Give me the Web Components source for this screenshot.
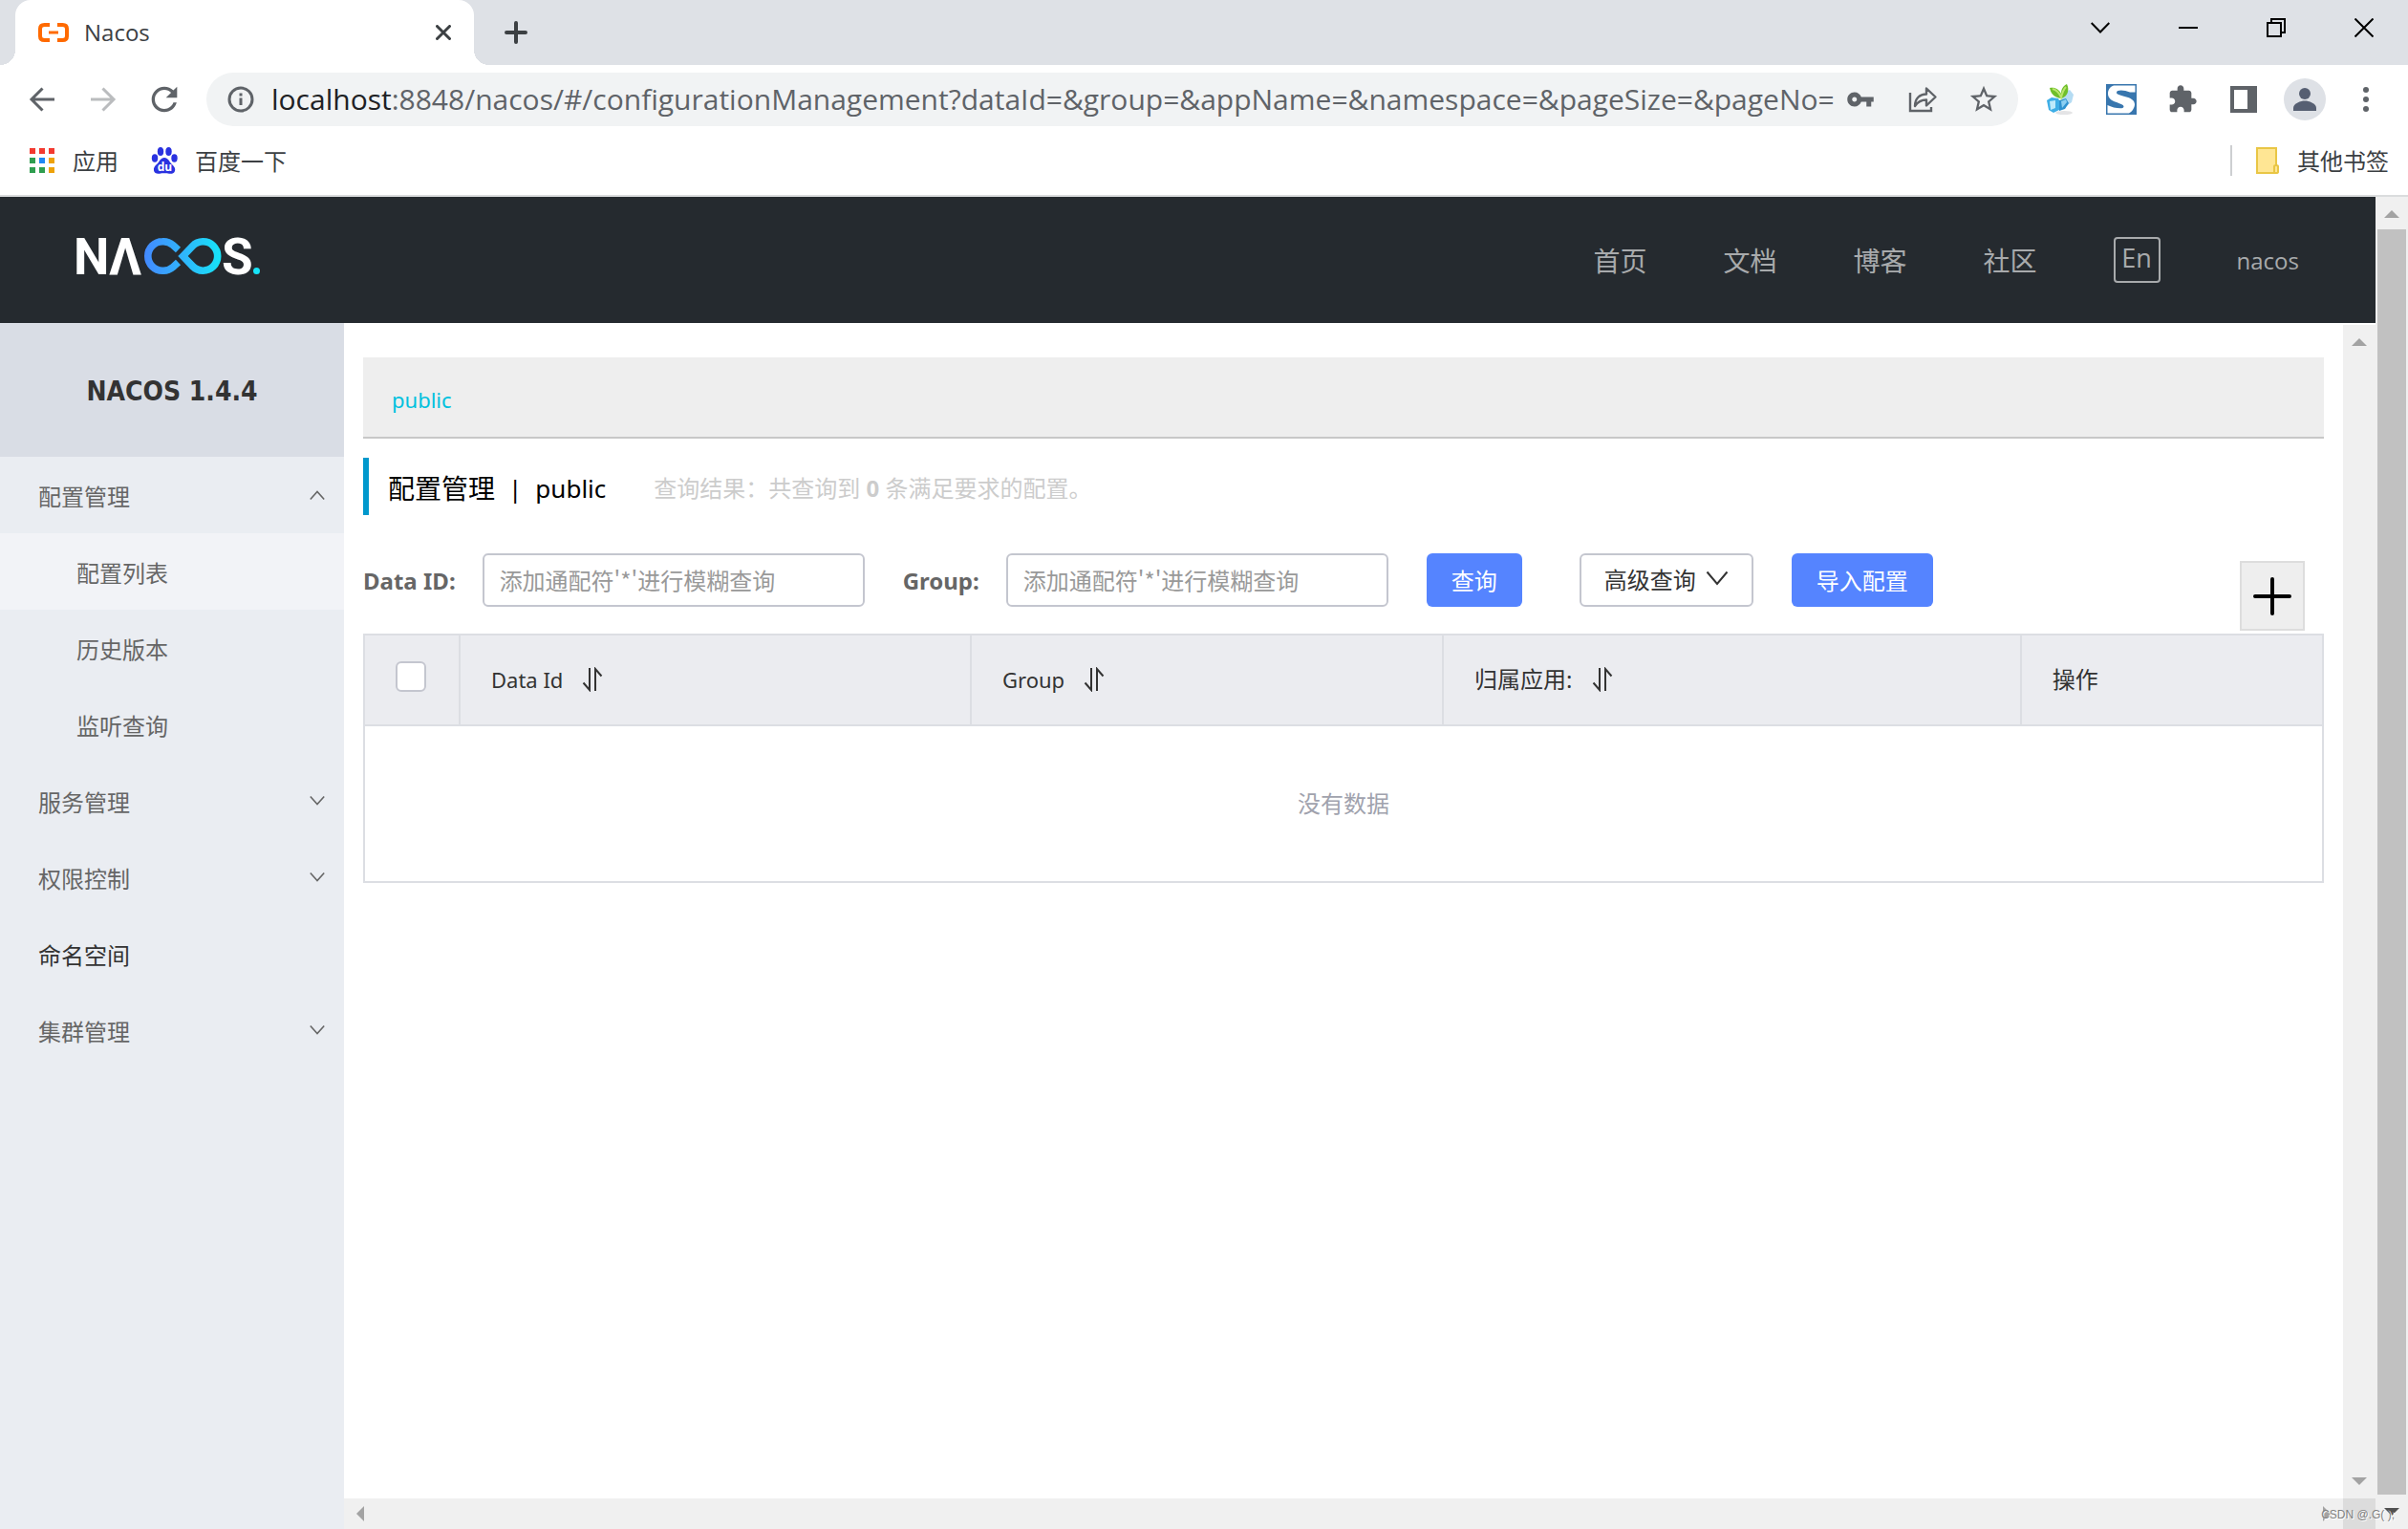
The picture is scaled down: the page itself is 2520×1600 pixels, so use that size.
<!DOCTYPE html>
<html lang="zh-CN">
<head>
<meta charset="utf-8">
<title>Nacos</title>
<style>
  html, body { margin: 0; height: 100%; }
  body {
    display: flex; flex-direction: column; height: 100vh; overflow: hidden; background: #fff;
    font-family: "Noto Sans", "Noto Sans CJK SC", sans-serif; font-size: 24px; color: #333;
    --latin: 22px;
  }
</style>
</head>
<body>
<browser-tabs></browser-tabs>
<browser-toolbar></browser-toolbar>
<browser-bookmarks></browser-bookmarks>
<page-viewport>
  <nacos-header slot="header"></nacos-header>
  <nacos-sidebar slot="side"></nacos-sidebar>
  <config-page slot="main"></config-page>
</page-viewport>

<script>
const define = (name, css, html) => {
  const tpl = document.createElement('template');
  tpl.innerHTML = `<style>
    :host, *, *::before, *::after { box-sizing: border-box; }
    button { font: inherit; color: inherit; background: none; border: 0; padding: 0; margin: 0;
      display: flex; align-items: center; justify-content: center; cursor: pointer; }
    a { color: inherit; text-decoration: none; }
    svg { display: block; flex: none; }
    ${css}</style>${html}`;
  customElements.define(name, class extends HTMLElement {
    constructor() {
      super();
      this.attachShadow({ mode: 'open' }).append(tpl.content.cloneNode(true));
    }
  });
};

/* ---------- browser frame ---------- */
define('browser-tabs', `
  :host { display: flex; align-items: flex-end; height: 68px; flex: none; background: #dee1e6;
    font-family: "Open Sans", "Noto Sans CJK SC", sans-serif; color: #3c4043; }
  .flare { width: 16px; height: 16px; }
  .left { background: radial-gradient(circle at 0 0, #dee1e6 16px, #fff 16px); }
  .right { background: radial-gradient(circle at 100% 0, #dee1e6 16px, #fff 16px); }
  .tab { width: 480px; height: 68px; padding: 0 24px; display: flex; align-items: center; gap: 16px;
    background: #fff; border-radius: 16px 16px 0 0; }
  .title { flex: 1; font-size: 24px; line-height: 32px; }
  .new { width: 56px; height: 68px; }
  .window { display: flex; margin-left: auto; align-self: flex-start; }
  .window button { width: 92px; height: 58px; }
`, `
  <span class="flare left"></span>
  <div class="tab">
    <svg width="32" height="20" viewBox="0 0 32 20" fill="none" stroke="#ff6a00"><path d="M12 2H6.500Q2 2 2 6v8q0 4 4.500 4H12M20 2h5.500Q30 2 30 6v8q0 4-4.500 4H20" stroke-width="4"/><path d="M11 10h10" stroke-width="3"/></svg>
    <span class="title">Nacos</span>
    <button aria-label="Close tab"><svg width="16" height="16" viewBox="0 0 16 16" stroke="#3c4043" stroke-width="3" stroke-linecap="round"><path d="M1.500 1.500l13 13M14.500 1.500l-13 13"/></svg></button>
  </div>
  <span class="flare right"></span>
  <button class="new" aria-label="New tab"><svg width="24" height="24" viewBox="0 0 24 24" stroke="#3c4043" stroke-width="4" stroke-linecap="round"><path d="M12 2v20M2 12h20"/></svg></button>
  <div class="window">
    <button aria-label="Search tabs"><svg width="20" height="20" viewBox="0 0 20 20" fill="none" stroke="#000" stroke-width="2"><path d="M.7 5L10 14.500 19.300 5"/></svg></button>
    <button aria-label="Minimize"><svg width="20" height="20" viewBox="0 0 20 20" stroke="#000" stroke-width="2"><path d="M0 10h20"/></svg></button>
    <button aria-label="Restore"><svg width="20" height="20" viewBox="0 0 20 20" fill="none" stroke="#000" stroke-width="2"><path d="M1 5h14v14H1zM5 5V1h14v14h-4"/></svg></button>
    <button aria-label="Close"><svg width="20" height="20" viewBox="0 0 20 20" stroke="#000" stroke-width="2"><path d="M.5.500l19 19M19.500.500l-19 19"/></svg></button>
  </div>
`);

define('browser-toolbar', `
  :host { display: flex; align-items: center; height: 72px; flex: none; padding: 0 12px; background: #fff;
    font-family: "Open Sans", "Noto Sans CJK SC", sans-serif; }
  button { width: 64px; height: 56px; flex: none; }
  .box { flex: 1; min-width: 0; display: flex; align-items: center; height: 56px; margin: 0 12px;
    padding: 0 4px 0 20px; border-radius: 28px; background: #f1f3f4; font-size: 30px; line-height: 40px; }
  .box > svg { margin-right: 16px; }
  .key { width: 48px; justify-content: flex-start; }
  label { color: #202124; }
  input { flex: 1; min-width: 0; border: 0; padding: 0; margin: 0; background: none; outline: 0;
    font: inherit; color: #5f6368; height: 40px; }
  .avatar { display: grid; place-items: center; width: 44px; height: 44px; border-radius: 50%; background: #dee1e6; }
`, `
  <button aria-label="Back"><svg width="28" height="28" viewBox="0 0 28 28" fill="none" stroke="#5f6368" stroke-width="3"><path d="M27 14H3M14.500 2.500L3 14l11.500 11.500"/></svg></button>
  <button aria-label="Forward"><svg width="28" height="28" viewBox="0 0 28 28" fill="none" stroke="#babcbe" stroke-width="3"><path d="M1 14h24M13.500 2.500L25 14 13.500 25.500"/></svg></button>
  <button aria-label="Reload"><svg width="40" height="40" viewBox="0 0 24 24" fill="#5f6368"><path d="M17.650 6.350C16.200 4.900 14.210 4 12 4c-4.420 0-7.990 3.580-7.990 8s3.570 8 7.990 8c3.730 0 6.840-2.550 7.730-6h-2.080c-.82 2.330-3.040 4-5.650 4-3.310 0-6-2.690-6-6s2.690-6 6-6c1.660 0 3.140.69 4.220 1.780L13 11h7V4z"/></svg></button>
  <div class="box">
    <svg width="32" height="32" viewBox="0 0 32 32" fill="none" stroke="#5f6368" stroke-width="3"><circle cx="16" cy="16" r="12"/><path d="M16 14.500V22M16 9.500v3"/></svg>
    <label for="url">localhost</label><input id="url" type="text" spellcheck="false" value=":8848/nacos/#/configurationManagement?dataId=&amp;group=&amp;appName=&amp;namespace=&amp;pageSize=&amp;pageNo=">
    <button class="key" aria-label="Passwords"><svg width="30" height="30" viewBox="0 0 24 24" fill="#5f6368"><path d="M12.650 10C11.830 7.670 9.610 6 7 6c-3.310 0-6 2.690-6 6s2.690 6 6 6c2.610 0 4.830-1.670 5.650-4H17v4h4v-4h2v-4H12.650zM7 14c-1.100 0-2-.9-2-2s.9-2 2-2 2 .9 2 2-.9 2-2 2z"/></svg></button>
    <button aria-label="Share"><svg width="32" height="32" viewBox="0 0 32 32" fill="none" stroke="#5f6368" stroke-width="2.400"><path d="M3 9v19h22v-4"/><path d="M8 23c0-8 5-12.500 12-12.500V4.500l9.500 9-9.500 9v-6C14 16.500 11 18.500 8 23z" stroke-linejoin="round"/></svg></button>
    <button aria-label="Bookmark"><svg width="34" height="34" viewBox="0 0 24 24" fill="#5f6368"><path d="M22 9.240l-7.190-.62L12 2 9.190 8.630 2 9.240l5.460 4.730L5.820 21 12 17.270 18.180 21l-1.630-7.030L22 9.240zM12 15.400l-3.760 2.270 1-4.280-3.320-2.880 4.380-.38L12 6.100l1.710 4.040 4.380.38-3.320 2.880 1 4.280L12 15.400z"/></svg></button>
  </div>
  <button aria-label="Cube extension"><svg width="32" height="32" viewBox="0 0 32 32">
    <ellipse cx="20" cy="30" rx="9" ry="2" fill="#e4e4e6"/>
    <path d="M18 10l8-4 4 5-2 8-7 5-5-2z" fill="#b5dcf3"/>
    <path d="M2 17l5-3 7 1 2 4-1 8-6 3-5-3z" fill="#3eaee6"/>
    <path d="M5 18l6-1v8l-5 2z" fill="#bdeafb"/><path d="M15 17l7-2 3 5-4 6-6 2z" fill="#2f93d0"/><path d="M17 18l5-2 1 3-5 6z" fill="#8dd0f2"/>
    <path d="M17 15C9 14 6 9 5 4c6-1 10 2 12 6 0-5 2-8 6-10 3 6 1 13-6 15z" fill="#6fbf2b"/>
    <path d="M8 5c4 1 7 4 9 9 1-4 2-8 5-11" fill="none" stroke="#b9e56c" stroke-width="2"/></svg></button>
  <button aria-label="S extension"><svg width="32" height="32" viewBox="0 0 32 32"><path d="M0 0h32v32H0z" fill="#3876ae"/><path d="M30.500 1.500v7L25 8.500C19 6 11 5.500 11 9c0 4 19 3 19 12 0 4-3 8-6 9.500H1.500V22c6 3 17 5 17 1.500C18.500 19 2 20 2 10 2 5 5 2.500 8 1.500z" fill="#fff"/></svg></button>
  <button aria-label="Extensions"><svg width="32" height="32" viewBox="0 0 24 24" fill="#5f6368"><path d="M20.500 11H19V7c0-1.100-.9-2-2-2h-4V3.500C13 2.120 11.880 1 10.500 1S8 2.120 8 3.500V5H4c-1.100 0-1.990.9-1.990 2v3.800H3.500c1.490 0 2.700 1.210 2.700 2.700s-1.210 2.700-2.700 2.700H2V20c0 1.100.9 2 2 2h3.800v-1.500c0-1.490 1.210-2.700 2.700-2.700 1.490 0 2.700 1.210 2.700 2.700V22H17c1.100 0 2-.9 2-2v-4h1.500c1.380 0 2.500-1.120 2.500-2.500S21.880 11 20.500 11z"/></svg></button>
  <button aria-label="Side panel"><svg width="28" height="28" viewBox="0 0 28 28"><path d="M0 0h28v28H0zM4 4v20h14V4z" fill="#5f6368" fill-rule="evenodd"/></svg></button>
  <button aria-label="Profile"><span class="avatar"><svg width="24" height="24" viewBox="0 0 24 24" fill="#565f72"><circle cx="12" cy="6" r="6"/><path d="M0 24v-3c0-5 8-7.500 12-7.500S24 16 24 21v3z"/></svg></span></button>
  <button aria-label="Menu"><svg width="6" height="26" viewBox="0 0 6 26" fill="#5f6368"><circle cx="3" cy="3" r="3"/><circle cx="3" cy="13" r="3"/><circle cx="3" cy="23" r="3"/></svg></button>
`);

define('browser-bookmarks', `
  :host { display: flex; align-items: center; height: 66px; flex: none; padding: 0 20px 8px 30px; background: #fff;
    border-bottom: 2px solid #dadcdd; font-family: "Noto Sans CJK SC", sans-serif; font-size: 24px; line-height: 32px; color: #3c4043; }
  a { display: flex; align-items: center; gap: 18px; margin-right: 34px; }
  a:last-child { margin: 0 0 0 24px; }
  .rule { width: 2px; height: 32px; margin-left: auto; background: #cdcfd1; }
`, `
  <a href="#apps"><svg width="28" height="28" viewBox="0 0 28 28"><path d="M1 1h6v6H1zM11 1h6v6h-6zM21 1h6v6h-6z" fill="#f33a30"/><path d="M1 11h6v6H1zM1 21h6v6H1zM11 21h6v6h-6z" fill="#2f9e50"/><path d="M11 11h6v6h-6z" fill="#1e88f5"/><path d="M21 11h6v6h-6zM21 21h6v6h-6z" fill="#eea208"/></svg>应用</a>
  <a href="#baidu"><svg width="28" height="28" viewBox="0 0 28 28" fill="#2a32e0"><ellipse cx="10" cy="4.500" rx="3.200" ry="4.500"/><ellipse cx="18.500" cy="4.500" rx="3.200" ry="4.500"/><ellipse cx="4" cy="11.500" rx="3.200" ry="4.200"/><ellipse cx="24.500" cy="11.500" rx="3.200" ry="4.200"/><path d="M14 11c4 0 5 4 7.500 6.500C24 20 26 22 25 25c-1 3-4 3-6 2.700-3-.5-7-.5-10 0C6 28 3.500 27.500 3 24.500c-.6-3 1-5 3.500-7C9 15 10 11 14 11z"/><text x="14.500" y="25" font-family="Open Sans, sans-serif" font-size="12" font-weight="700" text-anchor="middle" fill="#fff">du</text></svg>百度一下</a>
  <span class="rule"></span>
  <a href="#other"><svg width="26" height="28" viewBox="0 0 26 28" fill="#ffe694" stroke="#e9c645" stroke-width="2"><path d="M2 1h20v26H2z"/><path d="M20 27v-7q0-1 2-1t2 1v6q0 1-2 1z"/></svg>其他书签</a>
`);

define('scroll-bar', `
  :host { display: flex; align-items: center; justify-content: space-between; background: #f0f0f0; --arrow: #a3a3a3; --end: var(--arrow); }
  :host([axis="y"]) { flex-direction: column; width: 34px; padding: 14px 0; }
  :host([axis="x"]) { height: 32px; padding: 0 13px; }
  :host([thumb]) { --end: #505050; }
  .thumb { display: none; }
  :host([thumb]) .thumb { display: block; flex: 1; width: 30px; margin: 12px 0 14px; background: #c1c1c1; }
  i { border: 8px solid transparent; }
  :host([axis="y"]) .a { border-top: 0; border-bottom-color: var(--arrow); }
  :host([axis="y"]) .b { border-bottom: 0; border-top-color: var(--end); }
  :host([axis="x"]) .a { border-left: 0; border-right-color: var(--arrow); }
  :host([axis="x"]) .b { border-right: 0; border-left-color: var(--arrow); }
`, `<i class="a"></i><span class="thumb"></span><i class="b"></i>`);

define('page-viewport', `
  :host { display: flex; flex: 1; min-height: 0; position: relative; }
  .app { flex: 1; min-width: 0; display: flex; flex-direction: column; }
  .body { flex: 1; min-height: 0; display: flex; }
  .pane { flex: 1; min-width: 0; display: grid; grid-template: minmax(0, 1fr) auto / minmax(0, 1fr) auto; }
  .inner { margin-top: 2px; }
  .corner { background: #dcdcdc; }
  .mark { position: absolute; right: 14px; bottom: 6px; font: 12px/18px "Liberation Sans", sans-serif; color: #808080; text-shadow: 1px 1px 0 #fff; white-space: pre; }
`, `
  <div class="app">
    <slot name="header"></slot>
    <div class="body">
      <slot name="side"></slot>
      <div class="pane">
        <slot name="main"></slot>
        <scroll-bar axis="y" class="inner"></scroll-bar>
        <scroll-bar axis="x"></scroll-bar>
        <span class="corner"></span>
      </div>
    </div>
  </div>
  <scroll-bar axis="y" thumb></scroll-bar>
  <span class="mark">CSDN @.G( );</span>
`);

/* ---------- Nacos console ---------- */
define('nacos-header', `
  :host { display: flex; align-items: center; justify-content: space-between; height: 132px; flex: none; padding: 0 80px 0 72px; background: #252a2f; color: #a8aaac; }
  svg { margin-bottom: 6px; }
  nav { display: flex; align-items: center; gap: 80px; font-size: 28px; line-height: 40px; }
  nav a { padding-top: 2px; }
  .lang { width: 49px; height: 48px; border: 2px solid #a8aaac; border-radius: 4px; font: 27px/40px "Open Sans", sans-serif; padding-bottom: 4px; }
  .user { font: 24px/40px "Open Sans", sans-serif; }
`, `
  <svg width="202" height="64" viewBox="-8 -12 202 64" role="img" aria-label="Nacos">
    <defs><linearGradient id="g" gradientUnits="userSpaceOnUse" x1="71" y1="0" x2="151" y2="0"><stop offset="0" stop-color="#4389ff"/><stop offset=".5" stop-color="#30b4fb"/><stop offset="1" stop-color="#16e4f8"/></linearGradient></defs>
    <g font-family="Roboto, sans-serif" font-size="53" font-weight="700" fill="#fff"><text x="-3" y="38">N</text><text x="34" y="38">Λ</text><text x="152" y="38">S</text></g>
    <g fill="none" stroke="url(#g)" stroke-width="7.600"><path d="M106.500 12.500L101 7.500A15.200 15.200 0 0 0 90 3.800A15.200 15.200 0 0 0 90 34.200A15.200 15.200 0 0 0 101 30.500L106.500 25.500"/><path d="M111.500 19L121.500 8.500A15.200 15.200 0 1 1 121.500 29.500Z"/></g>
    <circle cx="188.500" cy="34.500" r="3.500" fill="#16e4f8"/>
  </svg>
  <nav>
    <a href="#home">首页</a><a href="#docs">文档</a><a href="#blog">博客</a><a href="#community">社区</a>
    <button class="lang">En</button>
    <a class="user" href="#user">nacos</a>
  </nav>
`);

define('menu-item', `
  :host { display: block; color: #666; }
  a { display: flex; align-items: center; justify-content: space-between; height: 80px; padding: 4px 20px 0 40px; font-size: 24px; line-height: 32px; }
  :host([level="2"]) a { padding-left: 80px; }
  :host([selected]) { background: #f2f3f7; }
  :host([plain]) { color: #333; }
  svg { display: none; margin-bottom: 4px; }
  :host([open]) svg, :host([closed]) svg { display: block; }
  :host([open]) svg { rotate: 180deg; }
`, `<a href="#menu"><slot></slot><svg width="16" height="12" viewBox="0 0 16 12" fill="none" stroke="#666" stroke-width="1.600"><path d="M.8 1.500L8 9.500l7.200-8"/></svg></a>`);

define('nacos-sidebar', `
  :host { display: block; width: 360px; flex: none; background: #eaedf2; }
  h1 { display: flex; align-items: center; justify-content: center; margin: 0; height: 140px; padding-top: 4px; font: 700 28px/40px "DejaVu Sans Condensed", "DejaVu Sans", sans-serif; color: #333; background: #d9dde5; }
`, `
  <h1>NACOS 1.4.4</h1>
  <nav>
    <menu-item open>配置管理</menu-item>
    <menu-item level="2" selected>配置列表</menu-item>
    <menu-item level="2">历史版本</menu-item>
    <menu-item level="2">监听查询</menu-item>
    <menu-item closed>服务管理</menu-item>
    <menu-item closed>权限控制</menu-item>
    <menu-item plain>命名空间</menu-item>
    <menu-item closed>集群管理</menu-item>
  </nav>
`);

define('search-form', `
  :host { display: block; }
  form { display: flex; align-items: flex-start; gap: 40px; }
  .field { display: flex; align-items: center; gap: 28px; color: #666; font-weight: 700; font-size: 24px; }
  label { white-space: nowrap; }
  input { width: 400px; height: 56px; padding: 0 16px 2px; border: 2px solid #c4c6cf; border-radius: 6px; background: #fff; font: 24px "Noto Sans CJK SC", sans-serif; color: #333; }
  input::placeholder { color: #999; opacity: 1; }
  .btn { height: 56px; padding: 0 26px 2px; border-radius: 6px; white-space: nowrap; }
  .primary { background: #5584ff; color: #fff; }
  .more { margin-left: 20px; padding: 0 24px 4px; border: 2px solid #c4c6cf; gap: 10px; color: #333; }
  .add { width: 68px; height: 73px; margin: 8px 20px -25px auto; background: #eee; border: 2px solid #ddd; }
`, `
  <form onsubmit="return false">
    <div class="field"><label for="data-id">Data ID:</label><input id="data-id" type="text" placeholder="添加通配符'*'进行模糊查询"></div>
    <div class="field"><label for="group">Group:</label><input id="group" type="text" placeholder="添加通配符'*'进行模糊查询"></div>
    <button class="btn primary">查询</button>
    <button class="btn more" type="button">高级查询<svg width="24" height="16" viewBox="0 0 24 16" fill="none" stroke="#333" stroke-width="2"><path d="M1.500 1.500L12 14 22.500 1.500"/></svg></button>
    <button class="btn primary" type="button">导入配置</button>
    <button class="add" type="button" aria-label="新建配置"><svg width="40" height="40" viewBox="0 0 40 40" stroke="#000" stroke-width="4" stroke-linecap="round"><path d="M20 2v36M2 20h36"/></svg></button>
  </form>
`);

define('sort-icon', `:host { display: inline-block; margin-left: 20px; vertical-align: -4px; }`,
  `<svg width="22" height="26" viewBox="0 0 22 26" fill="none" stroke="#333" stroke-width="2"><path d="M8 1v23L1.500 16.500M14 25V2l6.500 7.500"/></svg>`);

define('config-table', `
  :host { display: block; }
  table { width: 100%; table-layout: fixed; border-collapse: collapse; border: 2px solid #dcdee3; }
  th { height: 95px; padding: 0 32px 2px; border: 2px solid #dcdee3; background: #ebecf0; font-weight: 400; font-size: var(--latin); line-height: 32px; text-align: left; color: #333; }
  .cjk { font-size: 24px; }
  td { height: 164px; padding: 0; text-align: center; font-size: 24px; line-height: 32px; color: #a0a2ad; }
  input { appearance: none; display: block; width: 32px; height: 32px; margin: 0 0 6px; border: 2px solid #c4c6cf; border-radius: 6px; background: #fff; }
`, `
  <table>
    <colgroup><col style="width:100px"><col style="width:26.1%"><col style="width:24.1%"><col style="width:29.5%"><col></colgroup>
    <thead><tr>
      <th><input type="checkbox" aria-label="全选"></th>
      <th>Data Id<sort-icon></sort-icon></th>
      <th>Group<sort-icon></sort-icon></th>
      <th class="cjk">归属应用:<sort-icon></sort-icon></th>
      <th class="cjk">操作</th>
    </tr></thead>
    <tbody><tr><td colspan="5">没有数据</td></tr></tbody>
  </table>
`);

define('config-page', `
  :host { display: block; min-width: 0; padding: 36px 20px 0; background: #fff; }
  .space { height: 85px; padding: 4px 30px 0; display: flex; align-items: center; background: #eee; border-bottom: 2px solid #c8c8c8; color: #00c1de; font-size: var(--latin); }
  .head { display: flex; align-items: center; height: 60px; margin: 20px 0 40px; padding: 4px 0 0 20px; border-left: 6px solid #0098cc; }
  h2 { display: flex; gap: 14px; margin: 0; font-size: 28px; font-weight: 400; line-height: 40px; color: #000; }
  .latin { font-size: 26px; }
  p { margin: 0 0 0 50px; color: #ccc; line-height: 40px; }
  search-form { margin-bottom: 28px; }
`, `
  <div class="space"><a href="#public">public</a></div>
  <div class="head"><h2><span>配置管理</span><span class="latin">|</span><span class="latin">public</span></h2><p>查询结果：共查询到 <b>0</b> 条满足要求的配置。</p></div>
  <search-form></search-form>
  <config-table></config-table>
`);
</script>
</body>
</html>
